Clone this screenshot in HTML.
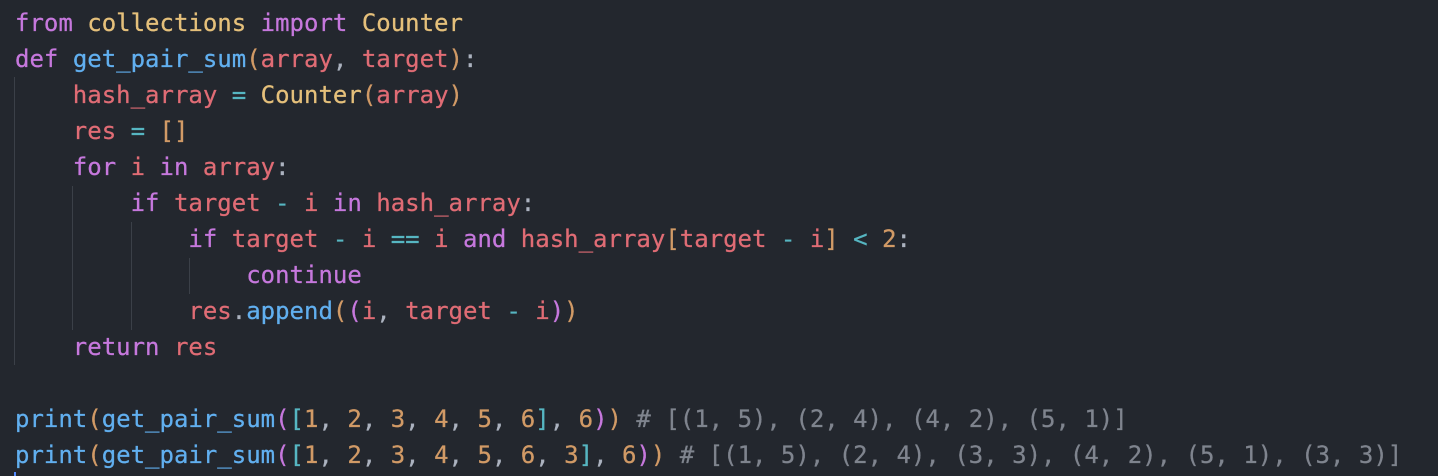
<!DOCTYPE html>
<html><head><meta charset="utf-8"><style>
html,body{margin:0;padding:0;background:#23272e;width:1438px;height:476px;overflow:hidden}
pre{position:absolute;left:15px;top:5px;margin:0;font-family:"DejaVu Sans Mono","Liberation Mono",monospace;font-size:24px;line-height:36px;color:#abb2bf;white-space:pre;-webkit-text-stroke:0.25px currentColor}
.k{color:#c678dd}.y{color:#e5c07b}.f{color:#61afef}.v{color:#e06c75}.o{color:#56b6c2}.n{color:#d19a66}.c{color:#7f848e}.p{color:#abb2bf}
.b1{color:#d19a66}.b2{color:#c678dd}.b3{color:#56b6c2}
.g{position:absolute;width:1px;background:#3b4048}
</style></head><body>
<div class="g" style="left:14px;top:77px;height:288px"></div>
<div class="g" style="left:72px;top:186px;height:144px"></div>
<div class="g" style="left:131px;top:222px;height:108px"></div>
<div class="g" style="left:189px;top:258px;height:36px"></div>
<pre><span class="k">from</span> <span class="y">collections</span> <span class="k">import</span> <span class="y">Counter</span>
<span class="k">def</span> <span class="f">get_pair_sum</span><span class="b1">(</span><span class="v">array</span>, <span class="v">target</span><span class="b1">)</span>:
    <span class="v">hash_array</span> <span class="o">=</span> <span class="y">Counter</span><span class="b1">(</span><span class="v">array</span><span class="b1">)</span>
    <span class="v">res</span> <span class="o">=</span> <span class="b1">[]</span>
    <span class="k">for</span> <span class="v">i</span> <span class="k">in</span> <span class="v">array</span>:
        <span class="k">if</span> <span class="v">target</span> <span class="o">-</span> <span class="v">i</span> <span class="k">in</span> <span class="v">hash_array</span>:
            <span class="k">if</span> <span class="v">target</span> <span class="o">-</span> <span class="v">i</span> <span class="o">==</span> <span class="v">i</span> <span class="k">and</span> <span class="v">hash_array</span><span class="b1">[</span><span class="v">target</span> <span class="o">-</span> <span class="v">i</span><span class="b1">]</span> <span class="o">&lt;</span> <span class="n">2</span>:
                <span class="k">continue</span>
            <span class="v">res</span>.<span class="f">append</span><span class="b1">(</span><span class="b2">(</span><span class="v">i</span>, <span class="v">target</span> <span class="o">-</span> <span class="v">i</span><span class="b2">)</span><span class="b1">)</span>
    <span class="k">return</span> <span class="v">res</span>

<span class="f">print</span><span class="b1">(</span><span class="f">get_pair_sum</span><span class="b2">(</span><span class="b3">[</span><span class="n">1</span>, <span class="n">2</span>, <span class="n">3</span>, <span class="n">4</span>, <span class="n">5</span>, <span class="n">6</span><span class="b3">]</span>, <span class="n">6</span><span class="b2">)</span><span class="b1">)</span> <span class="c"># [(1, 5), (2, 4), (4, 2), (5, 1)]</span>
<span class="f">print</span><span class="b1">(</span><span class="f">get_pair_sum</span><span class="b2">(</span><span class="b3">[</span><span class="n">1</span>, <span class="n">2</span>, <span class="n">3</span>, <span class="n">4</span>, <span class="n">5</span>, <span class="n">6</span>, <span class="n">3</span><span class="b3">]</span>, <span class="n">6</span><span class="b2">)</span><span class="b1">)</span> <span class="c"># [(1, 5), (2, 4), (3, 3), (4, 2), (5, 1), (3, 3)]</span></pre>
<div style="position:absolute;left:14px;top:472px;width:2px;height:4px;background:#528bff"></div>
</body></html>
